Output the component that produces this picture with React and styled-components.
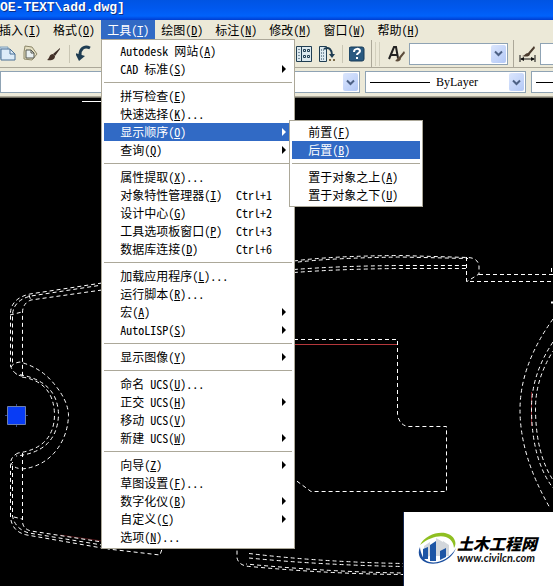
import React, {useState} from 'react'
import styled, {createGlobalStyle, css} from 'styled-components'

const colors = {
  face: '#ece9d8',
  highlight: '#316ac5',
  border: '#aca899',
  field: '#8fa3b4',
  navy: '#1f3d52',
}

const GlobalStyle = createGlobalStyle`
  *{
    box-sizing: border-box;
  }
  body{
    margin: 0;
    background: #000;
    overflow: hidden;
  }
  body, button, select{
    font-family: "Noto Sans CJK SC", sans-serif;
    font-size: 12px;
    line-height: 18px;
    font-feature-settings: "hwid" 1;
    color: #000;
  }
`

const Window = styled.div`
  display: flex;
  flex-direction: column;
  min-height: 100vh;
  overflow: hidden;
`

const TitleBar = styled.header`
  height: 20px;
  background: linear-gradient(#0054e3, #0058ee 40%, #0062fb 80%, #003dd0);
  color: #fff;
  font-family: "Liberation Mono", monospace;
  font-size: 13px;
  font-weight: bold;
  line-height: 16px;
  white-space: nowrap;
  text-shadow: 1px 1px #0a2f8a;
`

const MenuBar = styled.nav`
  display: flex;
  height: 20px;
  margin-left: -7px;
  background: ${colors.face};
`

const MenuSlot = styled.div`
  position: relative;
  flex: none;
`

const MenuButton = styled.button`
  display: block;
  height: 20px;
  padding: 0 6px;
  border: 0;
  white-space: nowrap;
  background: ${({$open}) => $open ? colors.highlight : 'transparent'};
  color: ${({$open}) => $open ? '#fff' : '#000'};
`

const Popup = styled.ul`
  position: absolute;
  z-index: 2;
  margin: 0;
  padding: 2px;
  list-style: none;
  background: #fff;
  border: 1px solid ${colors.border};

  ${({$sub}) => $sub ? css`
    top: -3px;
    left: 185px;
    width: 134px;
  ` : css`
    top: 19px;
    left: 0;
    width: 194px;
  `}
`

const PopupRow = styled.li`
  position: relative;
`

const PopupItem = styled.button`
  display: flex;
  align-items: center;
  width: 100%;
  height: 18px;
  padding: 0 6px 0 16px;
  border: 0;
  text-align: left;
  white-space: nowrap;
  background: ${({$active}) => $active ? colors.highlight : 'transparent'};
  color: ${({$active}) => $active ? '#fff' : '#000'};
`

const Shortcut = styled.span`
  margin-left: auto;
  margin-right: 14px;
`

const SubArrow = styled.span`
  margin-left: auto;
  border: 4px solid transparent;
  border-left-color: currentColor;
  border-right-width: 0;
`

const Divider = styled.li`
  height: 9px;
  padding: 4px 0;
  background: ${colors.border};
  background-clip: content-box;
`

const ToolRow = styled.div`
  display: flex;
  align-items: center;
  height: ${({$height}) => $height}px;
  background: ${colors.face};
  border-bottom: 1px solid ${colors.border};
  overflow: hidden;
`

const ToolGroup = styled.div`
  display: flex;
  flex: none;
  align-items: center;
  gap: 6px;
  height: 100%;
  padding-right: 5px;
  border-right: 1px solid ${colors.border};
`

const StyleGroup = styled(ToolGroup)`
  gap: 4px;
  padding-left: 5px;
  padding-right: 0;
`

const HiddenTools = styled.div`
  width: 191px;
`

const ToolButton = styled.button`
  display: flex;
  padding: 0;
  border: 0;
  background: transparent;
`

const Separator = styled.span`
  width: 1px;
  height: 18px;
  background: #c9c6b4;
`

const Grip = styled.span`
  flex: none;
  width: 5px;
  height: 24px;
  margin: 0 3px;
  border: 1px solid #d2cfbd;
  border-width: 0 1px;
`

const ComboBox = styled.div`
  position: relative;
  display: flex;
  flex: none;
  align-items: center;
  width: ${({$width}) => $width}px;
  height: 22px;
  margin-right: 5px;
  padding-left: 4px;
  gap: 6px;
  background: #fff;
  border: 1px solid ${colors.field};

  select{
    flex: 1;
    min-width: 0;
    padding: 0;
    border: 0;
    appearance: none;
    background: transparent;
    font-family: "Liberation Serif", serif;
  }
`

const ComboArrow = styled.span`
  position: absolute;
  top: 1px;
  right: 1px;
  display: flex;
  align-items: center;
  justify-content: center;
  width: 15px;
  height: 18px;
  background: linear-gradient(135deg, #dbe6fd, #b3c8f6);
  border-radius: 2px;
  pointer-events: none;
`

const LineSample = styled.span`
  width: 60px;
  height: 1px;
  background: #000;
`

const Canvas = styled.main`
  position: relative;
  display: flex;
  flex: 1;
  background: #000;
  border-top: 1px solid #716f64;

  >svg{
    width: 100%;
    height: 100%;
    min-height: 488px;
  }
`

const Watermark = styled.aside`
  position: absolute;
  right: 0;
  bottom: 0;
  display: flex;
  align-items: center;
  width: 150px;
  height: 74px;
  padding-left: 13px;
  background: #fff;
  border-left: 1px solid #14264e;
  font-feature-settings: normal;
`

const SiteName = styled.div`
  font-size: 16px;
  font-weight: 900;
  font-style: italic;
  line-height: 18px;
  white-space: nowrap;
`

const SiteLink = styled.a`
  display: block;
  color: #111;
  font-family: Lato, sans-serif;
  font-size: 11px;
  font-weight: 700;
  font-style: italic;
  line-height: 12px;
  text-decoration: none;
`

const menus = ['插入(I)', '格式(O)', '工具(T)', '绘图(D)', '标注(N)', '修改(M)', '窗口(W)', '帮助(H)']

const orderItems = [
  {text: '前置(F)'},
  {text: '后置(B)', active: true},
  null,
  {text: '置于对象之上(A)'},
  {text: '置于对象之下(U)'},
]

// null is a divider
const toolItems = [
  {text: 'Autodesk 网站(A)'},
  {text: 'CAD 标准(S)', more: true},
  null,
  {text: '拼写检查(E)'},
  {text: '快速选择(K)...'},
  {text: '显示顺序(O)', more: true, active: true, children: orderItems},
  {text: '查询(Q)', more: true},
  null,
  {text: '属性提取(X)...'},
  {text: '对象特性管理器(I)', keys: 'Ctrl+1'},
  {text: '设计中心(G)', keys: 'Ctrl+2'},
  {text: '工具选项板窗口(P)', keys: 'Ctrl+3'},
  {text: '数据库连接(D)', keys: 'Ctrl+6'},
  null,
  {text: '加载应用程序(L)...'},
  {text: '运行脚本(R)...'},
  {text: '宏(A)', more: true},
  {text: 'AutoLISP(S)', more: true},
  null,
  {text: '显示图像(Y)', more: true},
  null,
  {text: '命名 UCS(U)...'},
  {text: '正交 UCS(H)', more: true},
  {text: '移动 UCS(V)'},
  {text: '新建 UCS(W)', more: true},
  null,
  {text: '向导(Z)', more: true},
  {text: '草图设置(F)...'},
  {text: '数字化仪(B)', more: true},
  {text: '自定义(C)', more: true},
  {text: '选项(N)...'},
]

// underlines the access key between the brackets
function Label({text}) {
  const [before, rest] = text.split('(')
  return <span>{before}(<u>{rest[0]}</u>{rest.slice(1)}</span>
}

function Menu({items, sub}) {
  return (
    <Popup $sub={sub}>
      {items.map((item, i) => item ?
        <PopupRow key={i}>
          <PopupItem $active={item.active}>
            <Label text={item.text} />
            {item.keys && <Shortcut>{item.keys}</Shortcut>}
            {item.more && <SubArrow />}
          </PopupItem>
          {item.children && <Menu items={item.children} sub />}
        </PopupRow>
        :
        <Divider key={i} />
      )}
    </Popup>
  )
}

function Combo({width, label, value, line}) {
  return (
    <ComboBox $width={width}>
      {line && <LineSample />}
      <select aria-label={label}><option>{value}</option></select>
      <ComboArrow>
        <svg width="9" height="7" viewBox="0 0 9 7"><path d="M1 1.5l3.5 3.5L8 1.5" fill="none" stroke="#4d6185" strokeWidth="2" /></svg>
      </ComboArrow>
    </ComboBox>
  )
}

function Icon({children}) {
  return <svg width="17" height="18" viewBox="0 0 17 18" fill="none">{children}</svg>
}

const CopyIcon = () => (
  <Icon>
    <path d="M0 2h8v11H0z" fill="#cfe0ee" stroke="#7f9fbb" />
    <path d="M1 4h9l5 5v6H1z" fill="#dcebf8" stroke="#4a7196" />
    <path d="M10 4v5h5" stroke="#4a7196" />
  </Icon>
)

const PasteIcon = () => (
  <Icon>
    <path d="M2 1l7 1 5 7-5 6-8-1V7z" fill="#e4dfc2" stroke="#8c8769" />
    <path d="M3 5h5l3 3v5H3z" fill="#e9f0f2" stroke="#55564c" />
    <path d="M8 5v3h3" stroke="#55564c" />
  </Icon>
)

const BrushIcon = () => (
  <Icon>
    <path d="M14 3L7 9l2 2 5-7z" fill="#3b2c26" />
    <path d="M7 9c-4 0-3 4-6 6 4 1 8 0 8-4z" fill="#453229" />
  </Icon>
)

const UndoIcon = () => (
  <Icon>
    <path d="M14 3C8 0 4 4 4 10" stroke={colors.navy} strokeWidth="3" />
    <path d="M-1 8l10 3-6 5z" fill={colors.navy} />
  </Icon>
)

const GridIcon = () => (
  <Icon>
    <path d="M0.500 1.500h15v15h-15z" fill="#dce9ef" stroke={colors.navy} />
    <path d="M5.500 2v14" stroke={colors.navy} />
    <path d="M3 4v11" stroke={colors.navy} strokeDasharray="1 2" />
    <path d="M7.500 4.500h2v2h-2zM11.500 4.500h2v2h-2zM7.500 10.500h2v2h-2zM11.500 10.500h2v2h-2z" stroke={colors.navy} />
  </Icon>
)

const PaletteIcon = () => (
  <Icon>
    <path d="M0.500 1.500h7v15h-7z" fill="#dce9ef" stroke={colors.navy} />
    <path d="M2 5h4M2 8h4M2 11h4M2 14h4" stroke={colors.navy} strokeDasharray="1 1" />
    <path d="M5 4c5-3 8 1 8 6" stroke={colors.navy} strokeWidth="2" />
    <path d="M10 9h6l-3 4z" fill={colors.navy} />
    <path d="M10 14h2v2h-2zM14 14h2v2h-2z" fill="#7c6b48" />
  </Icon>
)

const HelpIcon = () => (
  <Icon>
    <rect x="0" y="2" width="15" height="14" rx="2" fill="#2a5a80" stroke="#173a57" />
    <path d="M5 7c0-4 6-4 6-1 0 2-3 2-3 4M8 12v2" stroke="#fff" strokeWidth="2" />
  </Icon>
)

const TextStyleIcon = () => (
  <Icon>
    <path d="M1 14L6 2h2l2 11M3 10h6" stroke="#222" strokeWidth="2" />
    <path d="M16 6l-5 6c-2 0-2 3-4 4 3 1 6 0 6-3l4-5z" fill="#5c4c3b" />
  </Icon>
)

const DimStyleIcon = () => (
  <Icon>
    <path d="M15 1L9 8C6 8 6 11 3 11c3 1 8 1 8-2l5-6z" fill="#4a3b2e" />
    <path d="M1 10v7M16 10v7M2 14h13" stroke="#111" />
    <path d="M1 14l4-2v4zM16 14l-4-2v4z" fill="#111" />
  </Icon>
)

function Drawing() {
  return (
    <svg viewBox="0 98 553 488" preserveAspectRatio="xMinYMin slice" fill="none">
      <g stroke="#7d1f24">
        <path d="M294 344.5h103" stroke="#b5383c" />
        <path d="M60 535l42 6" stroke="#4c1215" />
        <path d="M531.5 392v34" />
      </g>
      <g stroke="#fff" strokeDasharray="4 3">
        <path d="M82 101.5h20" strokeDasharray="none" />
        {/* left bracket */}
        <path d="M102 283L30 294Q12 298 10.5 312V366Q14 375 22 376" />
        <path d="M102 285L31 296Q14 300 12.5 314V364" strokeDashoffset="3" />
        <path d="M102 290L31 300Q23 303 22.5 312V377M10 315l12-3M29 295l2 6" />
        <path d="M11 367Q13 363 20 362Q42 368 55 385Q68 401 68.5 415Q68 436 55 452Q42 467 22 469Q13 468 11 463" />
        <path d="M22 377Q54 382 54.5 415Q54 448 18 453" />
        <path d="M16 374Q58 380 58.5 415Q57 452 16 456" strokeDashoffset="3" />
        <path d="M22.5 453V522Q23 529 31 531L102 542" />
        <path d="M18 453Q10 457 10.5 465V517Q12 532 27 535L102 548" />
        <path d="M12.5 462V516Q15 529 29 533L102 545L108 549L160 555L163 546M10 516l12 3" strokeDashoffset="3" />
        {/* upper edge */}
        <path d="M294 261Q330 256 400 255.5L468 257.5Q478 258 479 266V274L467 281.5" />
        <path d="M294 262.5Q330 258 400 257L468 258.5" strokeDashoffset="3" />
        <path d="M294 269.5Q340 266 400 265.5H468" />
        <path d="M294 272.5Q340 269 400 268.5H468" />
        <path d="M466.5 257V281.5H553M479 274.5H553M551.5 268v6" />
        <path d="M551 302.5h2" strokeDasharray="none" strokeWidth="2" />
        {/* inner panel */}
        <path d="M294 339.5H397.5V414Q399 425 408 426.5H446.5V491.5H311L294 479" />
        {/* right curve */}
        <path d="M553 319Q520 365 520 410Q520 456 550 508" />
        <path d="M553 342Q531 375 531.5 410Q532 460 553 488" />
        <path d="M553 351Q535 380 535.5 410Q536 454 553 480" strokeDashoffset="3" />
        {/* lower edge */}
        <path d="M232 547L237 549V558Q239 566 250 566.5Q330 574 403 574.5" />
        <path d="M246 564Q330 572 403 573" strokeDashoffset="3" />
        <path d="M249 553.5Q320 562 403 563.5M249 558Q320 565 403 566.5" />
      </g>
      <path d="M5 415.5h23M16.5 404v23" stroke="#33478f" />
      <path d="M7.5 406.5h18v18h-18z" fill="#083cf5" stroke="#6c7fae" />
    </svg>
  )
}

function SiteLogo() {
  return (
    <svg width="40" height="34" viewBox="0 0 40 34">
      <path d="M7 14l6-4v14l-6 2zM19 6l7 4v14h-7zM26 9l6 4v11h-6z" fill="#d3d7dc" />
      <path d="M6 17l5-2v12H6zM13 13l6-4v20h-6zM23 19l6-3v9l-6 3z" fill="#1d55a5" />
      <path d="M3 13C10-1 34-4 38 9c1 3 0 5-1 7C36 2 19 0 3 13z" fill="#8fbf21" />
      <path d="M3 15C-4 31 20 39 35 23c2-2 3-5 4-7-8 15-30 20-34 7-1-3-2-5-2-8z" fill="#1b4f9f" />
    </svg>
  )
}

export default function App() {
  const [open, setOpen] = useState('工具(T)')
  return (
    <Window>
      <GlobalStyle />
      <TitleBar>OE-TEXT\add.dwg]</TitleBar>
      <MenuBar>
        {menus.map(name => (
          <MenuSlot key={name}>
            <MenuButton $open={open === name} onClick={() => {setOpen(name)}}><Label text={name} /></MenuButton>
            {open === name && name === '工具(T)' && <Menu items={toolItems} />}
          </MenuSlot>
        ))}
      </MenuBar>
      <ToolRow $height={28}>
        <ToolGroup>
          <ToolButton aria-label="复制"><CopyIcon /></ToolButton>
          <ToolButton aria-label="粘贴"><PasteIcon /></ToolButton>
          <ToolButton aria-label="特性匹配"><BrushIcon /></ToolButton>
          <Separator />
          <ToolButton aria-label="放弃"><UndoIcon /></ToolButton>
          <HiddenTools />
          <ToolButton aria-label="设计中心"><GridIcon /></ToolButton>
          <ToolButton aria-label="工具选项板"><PaletteIcon /></ToolButton>
          <Separator />
          <ToolButton aria-label="帮助"><HelpIcon /></ToolButton>
        </ToolGroup>
        <Grip />
        <StyleGroup>
          <ToolButton aria-label="文字样式"><TextStyleIcon /></ToolButton>
          <Combo width={99} label="文字样式" value="" />
        </StyleGroup>
        <StyleGroup>
          <ToolButton aria-label="标注样式"><DimStyleIcon /></ToolButton>
          <Combo width={140} label="标注样式" value="" />
        </StyleGroup>
      </ToolRow>
      <ToolRow $height={29}>
        <Combo width={360} label="颜色" value="" />
        <Combo width={161} label="线型" value="ByLayer" line />
        <Combo width={161} label="线宽" value="" line />
      </ToolRow>
      <Canvas>
        <Drawing />
        <Watermark>
          <SiteLogo />
          <div>
            <SiteName>土木工程网</SiteName>
            <SiteLink href="#">www.civilcn.com</SiteLink>
          </div>
        </Watermark>
      </Canvas>
    </Window>
  )
}
